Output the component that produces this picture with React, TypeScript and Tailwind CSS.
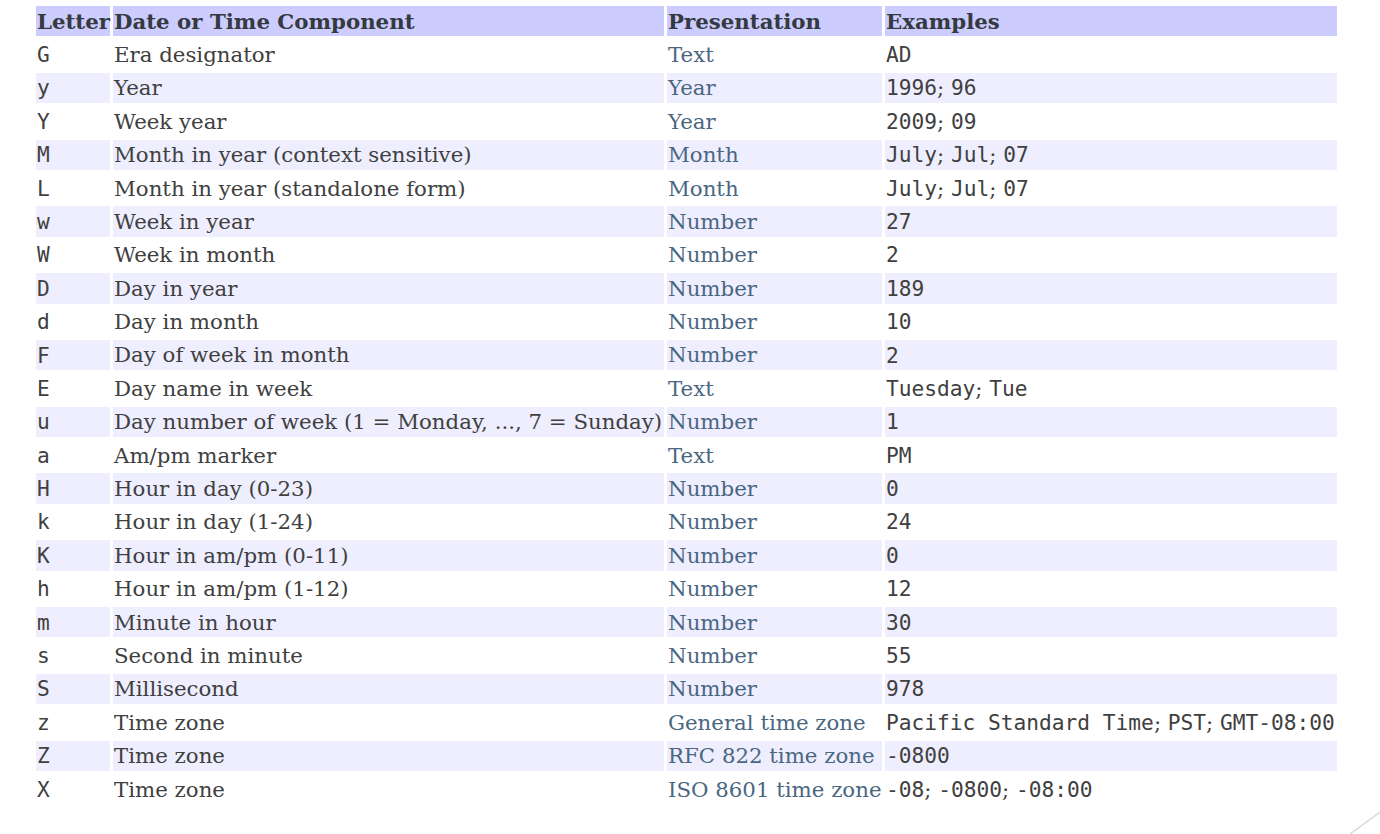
import React from "react";

type Row = { letter: string; component: string; presentation: string; example: string };

const rows: Row[] = [
  { letter: "G", component: "Era designator", presentation: "Text", example: "AD" },
  { letter: "y", component: "Year", presentation: "Year", example: "1996; 96" },
  { letter: "Y", component: "Week year", presentation: "Year", example: "2009; 09" },
  { letter: "M", component: "Month in year (context sensitive)", presentation: "Month", example: "July; Jul; 07" },
  { letter: "L", component: "Month in year (standalone form)", presentation: "Month", example: "July; Jul; 07" },
  { letter: "w", component: "Week in year", presentation: "Number", example: "27" },
  { letter: "W", component: "Week in month", presentation: "Number", example: "2" },
  { letter: "D", component: "Day in year", presentation: "Number", example: "189" },
  { letter: "d", component: "Day in month", presentation: "Number", example: "10" },
  { letter: "F", component: "Day of week in month", presentation: "Number", example: "2" },
  { letter: "E", component: "Day name in week", presentation: "Text", example: "Tuesday; Tue" },
  { letter: "u", component: "Day number of week (1 = Monday, ..., 7 = Sunday)", presentation: "Number", example: "1" },
  { letter: "a", component: "Am/pm marker", presentation: "Text", example: "PM" },
  { letter: "H", component: "Hour in day (0-23)", presentation: "Number", example: "0" },
  { letter: "k", component: "Hour in day (1-24)", presentation: "Number", example: "24" },
  { letter: "K", component: "Hour in am/pm (0-11)", presentation: "Number", example: "0" },
  { letter: "h", component: "Hour in am/pm (1-12)", presentation: "Number", example: "12" },
  { letter: "m", component: "Minute in hour", presentation: "Number", example: "30" },
  { letter: "s", component: "Second in minute", presentation: "Number", example: "55" },
  { letter: "S", component: "Millisecond", presentation: "Number", example: "978" },
  { letter: "z", component: "Time zone", presentation: "General time zone", example: "Pacific Standard Time; PST; GMT-08:00" },
  { letter: "Z", component: "Time zone", presentation: "RFC 822 time zone", example: "-0800" },
  { letter: "X", component: "Time zone", presentation: "ISO 8601 time zone", example: "-08; -0800; -08:00" },
];

const serif = "font-['DejaVu_Serif',serif] text-[21.3px]";
const mono = "font-['DejaVu_Sans_Mono',monospace] text-[21.2px]";

// examples are separate code spans joined by plain-text "; "
const Example = ({ text }: { text: string }) => {
  const parts = text.split("; ");
  return (
    <>
      {parts.map((p, i) => (
        <React.Fragment key={i}>
          {i > 0 && <span className={serif}>; </span>}
          <code className={mono}>{p}</code>
        </React.Fragment>
      ))}
    </>
  );
};

export default function App() {
  return (
    <div className="relative w-[1380px] h-[834px] bg-white overflow-hidden">
      <table className="ml-[33px] mt-[3px] w-[1307px] table-fixed border-separate border-spacing-[3px] text-[#404040]">
        <colgroup>
          <col className="w-[74px]" />
          <col className="w-[551px]" />
          <col className="w-[215px]" />
          <col className="w-[452px]" />
        </colgroup>
        <thead>
          <tr className="h-[30.4px]">
            {["Letter", "Date or Time Component", "Presentation", "Examples"].map((h) => (
              <th key={h} className={`${serif} bg-[#ccccff] text-left font-bold text-[#353a40] px-[1px] py-0 leading-none whitespace-nowrap`}>
                {h}
              </th>
            ))}
          </tr>
        </thead>
        <tbody>
          {rows.map((r, i) => {
            const bg = i % 2 === 1 ? "bg-[#eeeeff]" : "bg-white";
            return (
              <tr key={i} className="h-[30.4px]">
                <td className={`${mono} ${bg} px-[1px] leading-none`}>{r.letter}</td>
                <td className={`${serif} ${bg} px-[1px] leading-none whitespace-nowrap`}>{r.component}</td>
                <td className={`${serif} ${bg} px-[1px] leading-none whitespace-nowrap text-[#4a6782]`}>
                  {r.presentation}
                </td>
                <td className={`${bg} px-[1px] leading-none whitespace-nowrap`}>
                  <Example text={r.example} />
                </td>
              </tr>
            );
          })}
        </tbody>
      </table>
      <svg className="absolute right-0 bottom-0" width="40" height="30" viewBox="0 0 40 30">
        <line x1="10" y1="30" x2="40" y2="8" stroke="#d8d8d8" strokeWidth="1.5" />
      </svg>
    </div>
  );
}
